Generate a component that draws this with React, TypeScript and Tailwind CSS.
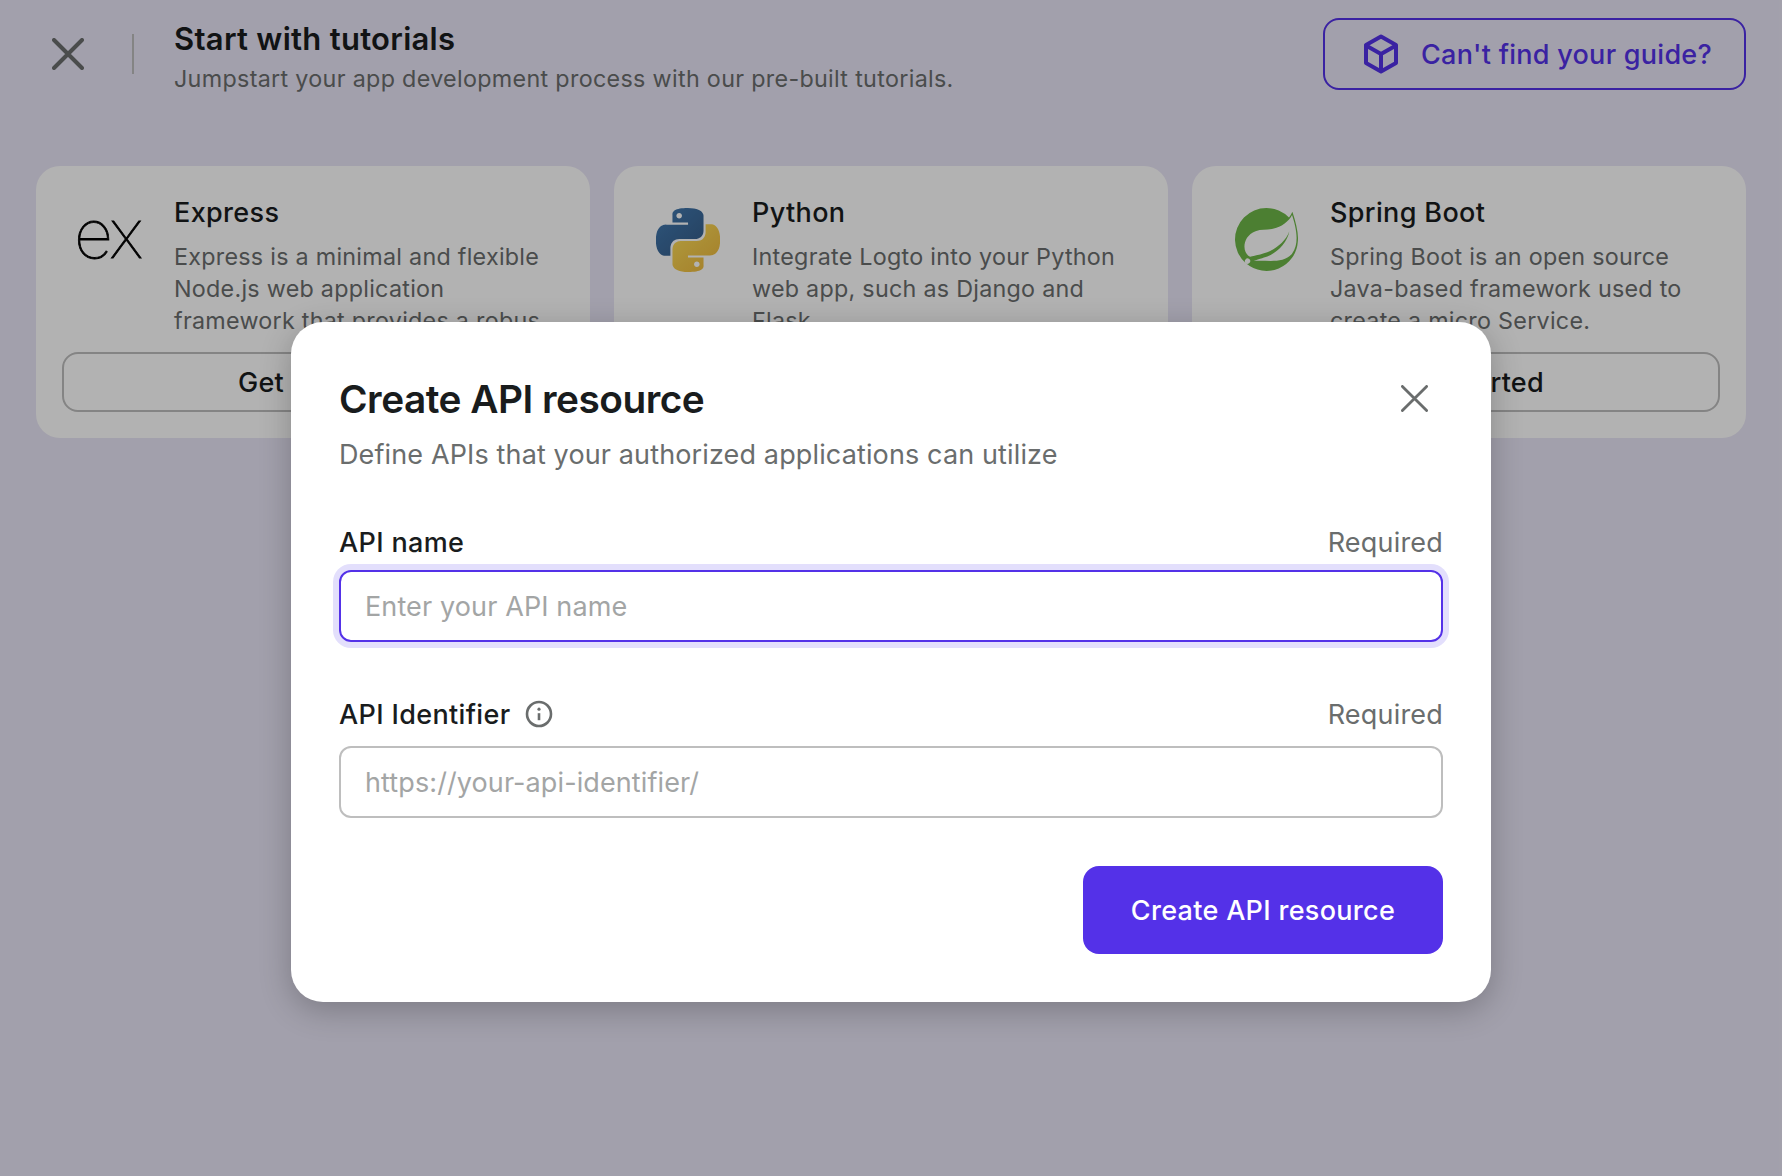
import type { ReactNode } from "react";
import { SiSpring } from "react-icons/si";

function CloseIcon({ size, width, className }: { size: number; width: number; className?: string }) {
  const r = width / 2;
  return (
    <svg width={size} height={size} viewBox={`0 0 ${size} ${size}`} className={className} fill="none" stroke="currentColor" strokeWidth={width} strokeLinecap="round">
      <path d={`M${r} ${r}L${size - r} ${size - r}M${size - r} ${r}L${r} ${size - r}`} />
    </svg>
  );
}

function CubeIcon() {
  return (
    <svg width="40" height="40" viewBox="0 0 40 40" fill="none" stroke="currentColor" strokeWidth="4" strokeLinejoin="round">
      <path d="M20 2.4 35 10.9V29.1L20 37.6 5 29.1V10.9Z" />
      <path d="M5 11.4 20 20.1 35 11.4M20 20.1V37" />
    </svg>
  );
}

function InfoIcon() {
  return (
    <svg width="28" height="28" viewBox="0 0 28 28" fill="none" className="-mt-0.5">
      <circle cx="14" cy="14" r="12" stroke="#6a6d6d" strokeWidth="2.6" />
      <path d="M14 13.2V20.2" stroke="#6a6d6d" strokeWidth="2.6" />
      <circle cx="14" cy="9.2" r="1.6" fill="#6a6d6d" />
    </svg>
  );
}

function ExpressLogo() {
  return (
    <div className="-mt-[7px] -ml-1 h-16 w-[68px] whitespace-nowrap text-[68px] leading-[64px] font-thin tracking-[-2.2px] text-black [-webkit-text-stroke:0.8px_black]">
      ex
    </div>
  );
}

function PythonLogo() {
  return (
    <svg width="64" height="64" viewBox="0 0 24 24">
      <defs>
        <linearGradient id="py-blue" x1="0" y1="0" x2="0.8" y2="0.9">
          <stop offset="0" stopColor="#427bb3" />
          <stop offset="1" stopColor="#375f8c" />
        </linearGradient>
        <linearGradient id="py-yellow" x1="0.1" y1="0.1" x2="0.8" y2="0.9">
          <stop offset="0" stopColor="#fbdc58" />
          <stop offset="1" stopColor="#eebb40" />
        </linearGradient>
      </defs>
      <path
        fill="url(#py-blue)"
        d="M14.25.18l.9.2.73.26.59.3.45.32.34.34.25.34.16.33.1.3.04.26.02.2-.01.13V8.5l-.05.63-.13.55-.21.46-.26.38-.3.31-.33.25-.35.19-.35.14-.33.1-.3.07-.26.04-.21.02H8.77l-.69.05-.59.14-.5.22-.41.27-.33.32-.27.35-.2.36-.15.37-.1.35-.07.32-.04.27-.02.21v3.06H3.17l-.21-.03-.28-.07-.32-.12-.35-.18-.36-.26-.36-.36-.35-.46-.32-.59-.28-.73-.21-.88-.14-1.05-.05-1.23.06-1.22.16-1.04.24-.87.32-.71.36-.57.4-.44.42-.33.42-.24.4-.16.36-.1.32-.05.24-.01h.16l.06.01h8.16v-.83H6.18l-.01-2.75-.02-.37.05-.34.11-.31.17-.28.25-.26.31-.23.38-.2.44-.18.51-.15.58-.12.64-.1.71-.06.77-.04.84-.02 1.27.05zm-6.3 1.98l-.23.33-.08.41.08.41.23.34.33.22.41.09.41-.09.33-.22.23-.34.08-.41-.08-.41-.23-.33-.33-.22-.41-.09-.41.09z"
      />
      <path
        fill="url(#py-yellow)"
        d="M21.04 6.11l.28.06.32.12.35.18.36.27.36.35.35.47.32.59.28.73.21.88.14 1.04.05 1.23-.06 1.23-.16 1.04-.24.86-.32.71-.36.57-.4.45-.42.33-.42.24-.4.16-.36.09-.32.05-.24.02-.16-.01h-8.22v.82h5.84l.01 2.76.02.36-.05.34-.11.31-.17.29-.25.25-.31.24-.38.2-.44.17-.51.15-.58.13-.64.09-.71.07-.77.04-.84.01-1.27-.04-1.07-.14-.9-.2-.73-.25-.59-.3-.45-.33-.34-.34-.25-.34-.16-.33-.1-.3-.04-.25-.02-.2.01-.13v-5.34l.05-.64.13-.54.21-.46.26-.38.3-.32.33-.24.35-.2.35-.14.33-.1.3-.06.26-.04.21-.02.13-.01h5.84l.69-.05.59-.14.5-.21.41-.28.33-.32.27-.35.2-.36.15-.36.1-.35.07-.32.04-.28.02-.21V6.07h2.09l.14.01zm-6.47 14.25l-.23.33-.08.41.08.41.23.33.33.23.41.08.41-.08.33-.23.23-.33.08-.41-.08-.41-.23-.33-.33-.23-.41-.08-.41.08z"
      />
    </svg>
  );
}

function TutorialCard({ logo, title, lines }: { logo: ReactNode; title: string; lines: string[] }) {
  return (
    <article className="flex h-[272px] flex-col rounded-3xl bg-white p-[26px]">
      <div className="flex h-40 pl-4">
        <div className="mt-4 mr-8 h-16 w-16 shrink-0">{logo}</div>
        <div className="min-w-0 pt-px">
          <h2 className="mb-2 text-[27px] leading-10 font-medium tracking-[0.35px] text-[#191c1d]">{title}</h2>
          <p className="text-[23.3px] leading-8 tracking-[0.27px] text-[#6a6d6d]">
            {lines.map((line) => (
              <span key={line} className="block whitespace-nowrap">
                {line}
              </span>
            ))}
          </p>
        </div>
      </div>
      <button className="h-[60px] rounded-2xl border-2 border-[#bebebe] pt-0.5 text-[27px] font-medium tracking-[0.28px] text-[#191c1d]">
        Get Started
      </button>
    </article>
  );
}

function Field({ placeholder, focused }: { placeholder: string; focused?: boolean }) {
  return (
    <input
      placeholder={placeholder}
      className={
        focused
          ? "block h-[72px] w-full rounded-xl border-2 border-[#5431e8] px-6 text-[27px] tracking-[0.12px] ring-6 ring-[#e3dffc] outline-none placeholder:text-[#a3a5a5]"
          : "block h-[72px] w-full rounded-xl border-2 border-[#bebebe] px-6 text-[27px] tracking-[0.1px] outline-none placeholder:text-[#a3a5a5]"
      }
    />
  );
}

export default function App() {
  return (
    <div className="relative h-[1176px] w-[1782px] overflow-hidden bg-[#e9e6f6] font-[Inter,sans-serif]">
      <header className="flex h-[166px] items-start px-9">
        <div className="mt-[38px] ml-4 text-[#6a6d6d]">
          <CloseIcon size={32} width={4} />
        </div>
        <div className="mt-[34px] ml-12 h-10 w-0.5 bg-[#bebebe]" />
        <div className="mt-[19px] ml-10">
          <h1 className="text-[31px] leading-10 font-semibold tracking-[0.28px] text-[#191c1d]">Start with tutorials</h1>
          <p className="mt-1 text-[23.3px] leading-8 tracking-[0.32px] text-[#6a6d6d]">
            Jumpstart your app development process with our pre-built tutorials.
          </p>
        </div>
        <button className="mt-[18px] ml-auto flex h-[72px] w-[423px] items-center gap-5 rounded-2xl border-2 border-[#5431e8] pl-9 text-[27px] font-medium tracking-[0.27px] whitespace-nowrap text-[#5431e8]">
          <CubeIcon />
          <span className="pt-0.5">Can't find your guide?</span>
        </button>
      </header>

      <main className="grid grid-cols-3 gap-6 px-9">
        <TutorialCard
          logo={<ExpressLogo />}
          title="Express"
          lines={["Express is a minimal and flexible", "Node.js web application", "framework that provides a robus"]}
        />
        <TutorialCard
          logo={<PythonLogo />}
          title="Python"
          lines={["Integrate Logto into your Python", "web app, such as Django and", "Flask."]}
        />
        <TutorialCard
          logo={<SiSpring size={63} color="#6db748" className="ml-px" />}
          title="Spring Boot"
          lines={["Spring Boot is an open source", "Java-based framework used to", "create a micro Service."]}
        />
      </main>

      <div className="absolute inset-0 flex items-start justify-center bg-black/30 pt-[322px]">
        <section className="h-[680px] w-[1200px] rounded-[32px] bg-white px-12 pt-[53px] shadow-[0_8px_32px_rgba(0,0,0,0.24)]">
          <div className="flex justify-between">
            <h2 className="text-[38.8px] leading-[48px] font-semibold tracking-[-0.5px] text-[#191c1d]">Create API resource</h2>
            <CloseIcon size={27} width={2.8} className="mt-[10px] mr-[15px] text-[#6a6d6d]" />
          </div>
          <p className="mt-3 text-[27px] leading-10 tracking-[0.13px] text-[#6a6d6d]">
            Define APIs that your authorized applications can utilize
          </p>

          <div className="mt-12 mb-[7px] flex justify-between text-[27px] leading-10">
            <label className="font-medium tracking-[0.35px] text-[#191c1d]">API name</label>
            <span className="tracking-[0.2px] text-[#6a6d6d]">Required</span>
          </div>
          <Field focused placeholder="Enter your API name" />

          <div className="mt-[53px] mb-[11px] flex justify-between text-[27px] leading-10">
            <label className="flex items-center gap-[14px] font-medium tracking-[0.35px] text-[#191c1d]">
              API Identifier
              <InfoIcon />
            </label>
            <span className="tracking-[0.2px] text-[#6a6d6d]">Required</span>
          </div>
          <Field placeholder="https://your-api-identifier/" />

          <div className="mt-12 flex justify-end">
            <button className="h-[88px] w-[360px] rounded-2xl bg-[#5431e8] pt-0.5 text-[27px] font-medium tracking-[0.31px] text-white">
              Create API resource
            </button>
          </div>
        </section>
      </div>
    </div>
  );
}
